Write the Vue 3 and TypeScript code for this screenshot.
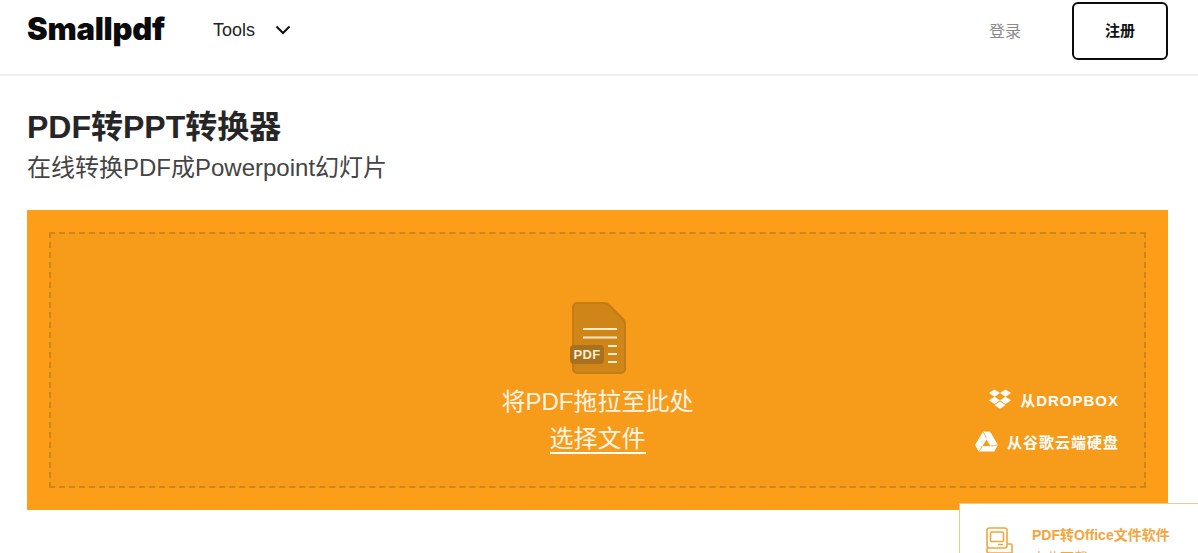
<script setup lang="ts">
const title = 'PDF转PPT转换器'
const subtitle = '在线转换PDF成Powerpoint幻灯片'
</script>

<template>
  <div class="page">
    <header class="nav">
      <span class="logo">Smallpdf</span>
      <span class="tools">Tools</span>
      <svg class="chev" width="16" height="10" viewBox="0 0 16 10"><path d="M1.500 1.500 8 8l6.500-6.500" fill="none" stroke="#111" stroke-width="2"/></svg>
      <span class="spacer"></span>
      <span class="login">登录</span>
      <span class="signup">注册</span>
    </header>
    <main class="main">
      <h1 class="title">{{ title }}</h1>
      <p class="sub">{{ subtitle }}</p>
      <section class="drop">
        <div class="dash">
          <svg class="pdf" width="60" height="74" viewBox="0 0 60 74">
            <path d="M7 2h27q3 0 5 2l14 14q2 2 2 5v45a4 4 0 0 1-4 4H7a4 4 0 0 1-4-4V6a4 4 0 0 1 4-4z" fill="#d08519" stroke="#c47c15" stroke-width="2"/>
            <path d="M13 28h34M13 36.500h34M38 45h9M38 53h9M38 61h9" stroke="#fdeccb" stroke-width="2" fill="none"/>
            <rect x="0" y="44" width="34" height="19" rx="4" fill="#a9701f"/>
            <text x="17" y="58" text-anchor="middle" class="pdft">PDF</text>
          </svg>
          <div class="drag">将PDF拖拉至此处</div>
          <div class="choose"><span>选择文件</span></div>
          <div class="clouds">
            <div class="cloud">
              <svg width="22" height="21" viewBox="0 0 22 20"><path fill="#fff" d="M5.500 0 11 3.600 5.500 7.200 0 3.600zM16.500 0 22 3.600 16.500 7.200 11 3.600zM0 10.800 5.500 7.200 11 10.800 5.500 14.400zM16.500 7.200 22 10.800 16.500 14.400 11 10.800zM5.500 15.600 11 12 16.500 15.600 11 19.200z"/></svg>
              <span>从DROPBOX</span>
            </div>
            <div class="cloud">
              <svg width="23" height="21" viewBox="0 0 23 20">
                <path fill="#fff" fill-rule="evenodd" d="M8 0h7l8 13.500-3.800 6.500H3.800L0 13.500zM11.500 8 7.500 14.500h8z"/>
                <path d="M8 0 11.500 6.500M15.500 14.500 23 13.500M7.500 14.500 3.800 20" stroke="#f79b1b" stroke-width=".8" fill="none"/>
              </svg>
              <span>从谷歌云端硬盘</span>
            </div>
          </div>
        </div>
      </section>
    </main>
    <aside class="promo">
      <svg class="mac" width="30" height="32" viewBox="0 0 30 32" fill="none" stroke="#f3a63d" stroke-width="1.600">
        <rect x="2" y="3" width="20" height="20" rx="2.500"/>
        <rect x="5.500" y="7" width="13" height="9.500" rx="1"/>
        <path d="M13 19.500h5M22 19h4a1 1 0 0 1 1 1v9M2 23v3a2 2 0 0 0 2 2h23"/>
      </svg>
      <div class="ptext">
        <div class="ptitle">PDF转Office文件软件</div>
        <div class="pline">点此下载</div>
      </div>
    </aside>
  </div>
</template>

<style>
html, body { margin: 0; background: #fff; overflow: hidden; }
</style>

<style scoped>
.page {
  position: relative;
  width: 1198px;
  height: 553px;
  overflow: hidden;
  font-family: "Liberation Sans", "Noto Sans CJK SC", sans-serif;
  color: #222;
}
.nav {
  display: flex;
  align-items: center;
  height: 76px;
  box-sizing: border-box;
  padding: 0 30px 14px 27px;
  border-bottom: 2px solid #eeeeee;
}
.logo {
  font-family: "Inter", sans-serif;
  font-weight: 900;
  font-size: 31px;
  letter-spacing: -0.25px;
  line-height: 36px;
  margin-bottom: 2px;
  color: #0b0b0b;
  width: 186px;
}
.tools { font-size: 18px; color: #222; }
.chev { margin-left: 20px; }
.spacer { flex: 1; }
.login { font-size: 16px; color: #8a8a8a; margin-right: 51px; }
.signup {
  width: 96px;
  height: 58px;
  margin-top: 2px;
  padding-bottom: 3px;
  box-sizing: border-box;
  border: 2px solid #0b0b0b;
  border-radius: 6px;
  display: flex;
  align-items: center;
  justify-content: center;
  font-size: 15px;
  font-weight: 700;
  color: #111;
}
.main { padding: 0 30px 0 27px; }
.title {
  margin: 28px 0 0;
  font-size: 32px;
  line-height: 46px;
  font-weight: 700;
  color: #262626;
}
.sub {
  margin: 0;
  font-size: 24px;
  line-height: 36px;
  color: #444;
}
.drop {
  margin-top: 24px;
  height: 300px;
  background: #fd9e18;
  padding: 22px;
  box-sizing: border-box;
}
.dash {
  position: relative;
  height: 100%;
  box-sizing: border-box;
  border: 2px dashed #d0851b;
  background: #f79b1b;
  display: flex;
  flex-direction: column;
  align-items: center;
  color: #fff;
  padding-top: 67px;
}
.pdf { margin-left: 4px; }
.pdft { font: 700 13px "Liberation Sans", sans-serif; fill: #fdeccb; letter-spacing: .4px; }
.drag { font-size: 24px; line-height: 36px; margin-top: 9px; color: #fff5e6; }
.choose { font-size: 24px; line-height: 36px; margin: 1px 0 0; height: 36px; }
.choose span { display: inline-block; height: 31px; border-bottom: 2px solid #fff; color: #fff5e6; }
.clouds {
  position: absolute;
  right: 25px;
  top: 154px;
  display: flex;
  flex-direction: column;
  align-items: flex-end;
  gap: 20px;
}
.cloud {
  display: flex;
  align-items: center;
  gap: 9px;
  color: #fff;
  font-size: 15px;
  font-weight: 700;
  letter-spacing: 1px;
  height: 22px;
}
.promo {
  position: absolute;
  left: 959px;
  top: 503px;
  width: 260px;
  height: 80px;
  box-sizing: border-box;
  background: #fff;
  border: 1px solid #f6c88a;
  display: flex;
  padding: 21px 0 0 25px;
  gap: 17px;
}
.mac { flex: none; }
.ptitle { font-size: 14px; font-weight: 700; color: #f3a63d; line-height: 18px; margin-top: 1px; white-space: nowrap; }
.pline { font-size: 14px; color: #f3a63d; line-height: 18px; margin-top: 5px; }
</style>
